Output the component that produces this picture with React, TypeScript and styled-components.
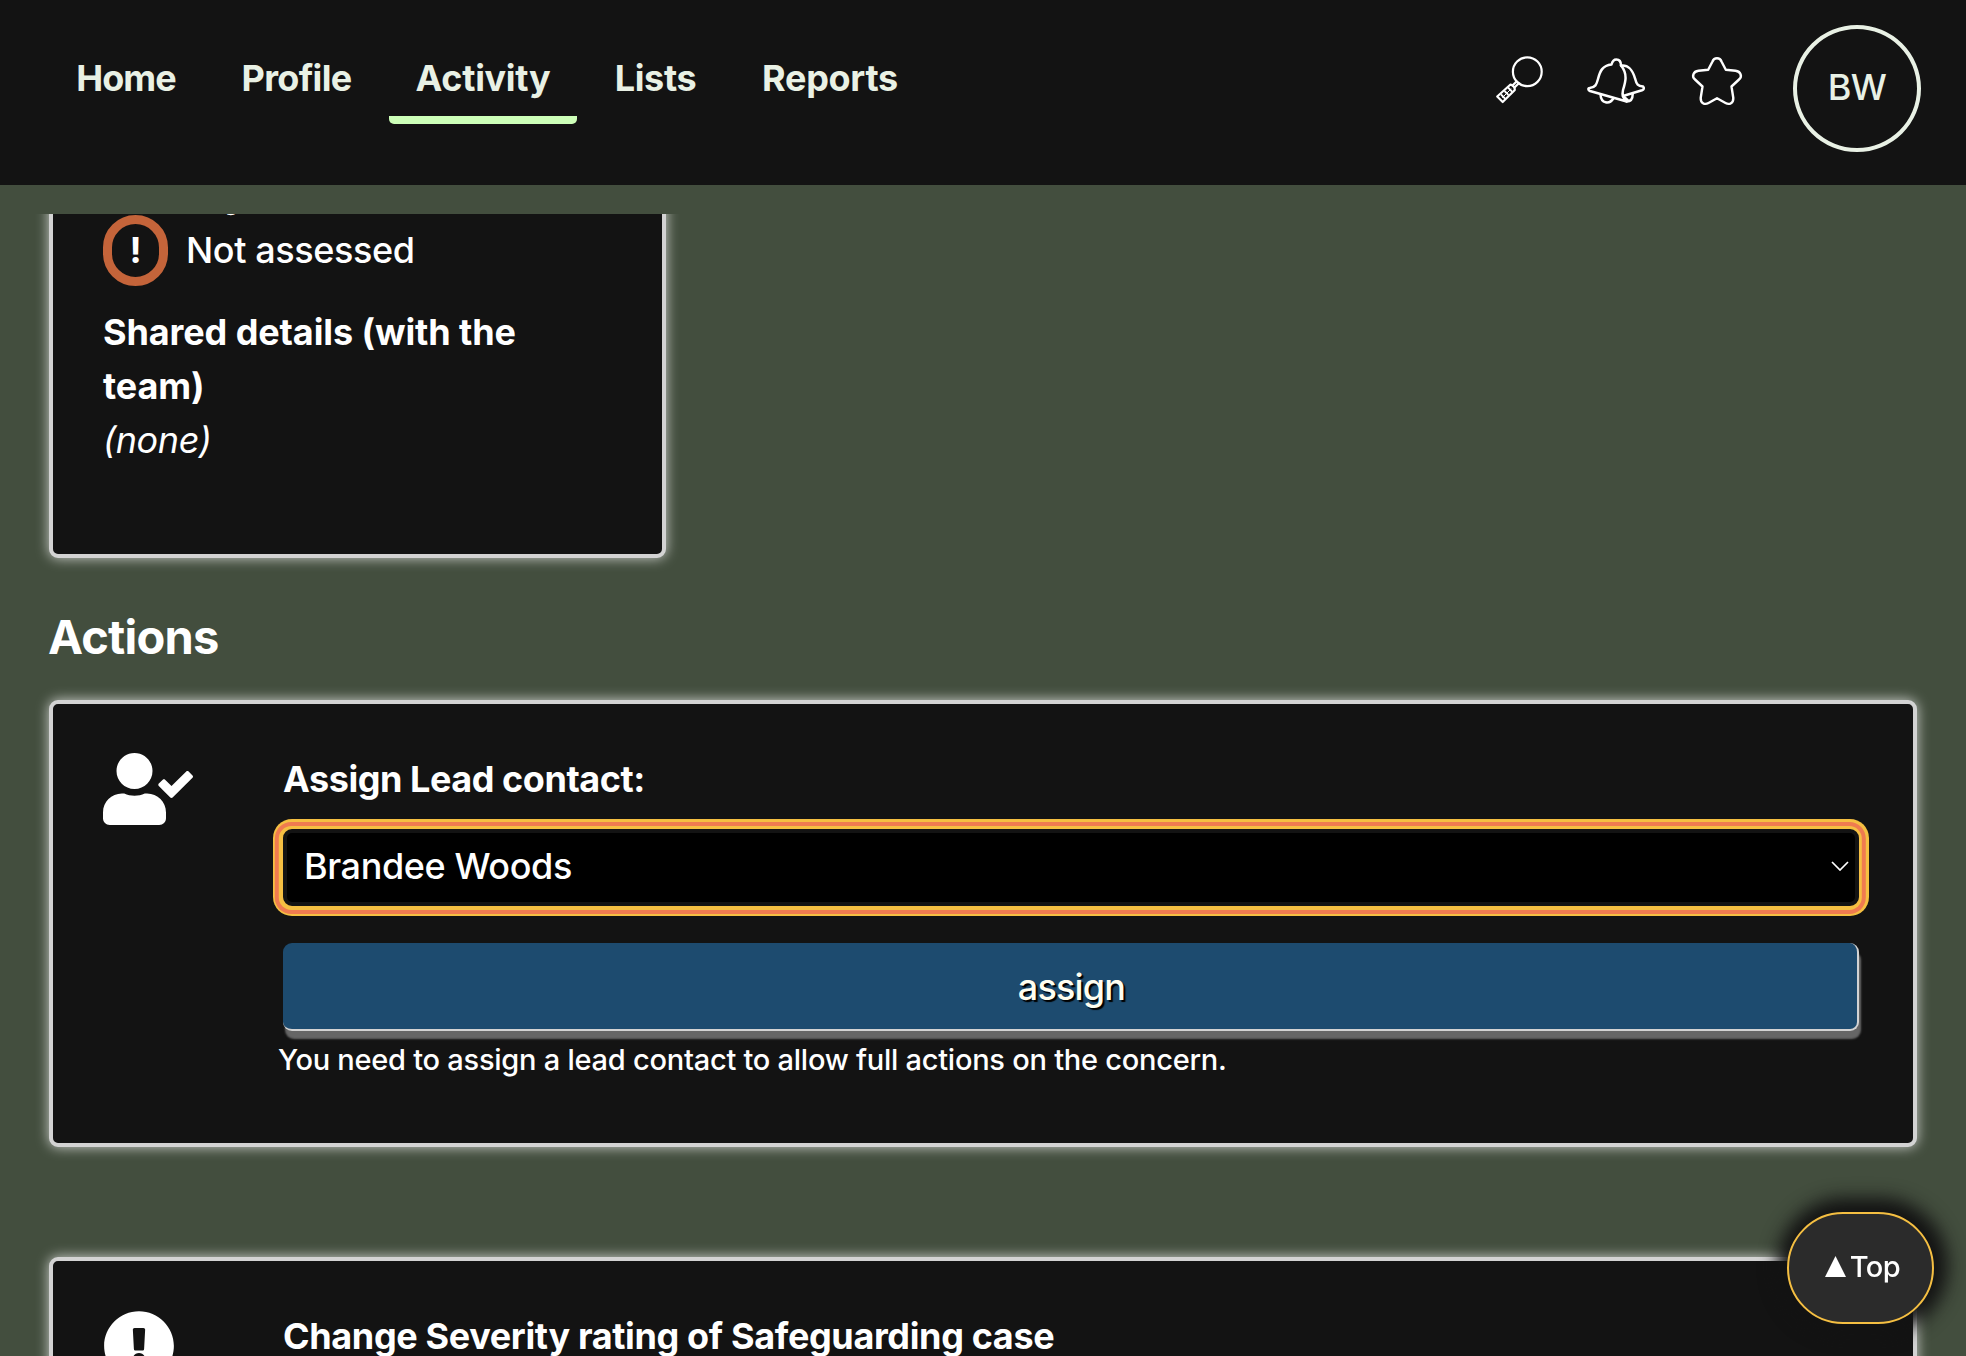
import React from "react";
import styled, { createGlobalStyle, css } from "styled-components";
import { FaUserCheck, FaExclamationCircle } from "react-icons/fa";

const Global = createGlobalStyle`
  * { box-sizing: border-box; }
  body {
    margin: 0;
    height: 1356px;
    overflow: hidden;
    background: #434e3e;
    color: #fff;
    font-family: Inter, "Liberation Sans", sans-serif;
    font-size: 36px;
    font-weight: 450;
  }
`;

const Page = styled.div`
  display: flex;
  flex-direction: column;
  height: 1356px;
  overflow: hidden;
`;

const Header = styled.header`
  flex: none;
  display: flex;
  justify-content: space-between;
  height: 185px;
  padding: 25px 45px 0 48px;
  background: #131313;
  color: #e9f1e5;
`;

const Nav = styled.nav`
  display: flex;
  gap: 10px;
`;

const Tab = styled.a<{ $width: number; $active?: boolean }>`
  display: flex;
  justify-content: center;
  align-items: center;
  width: ${(p) => p.$width}px;
  height: 99px;
  padding-top: 15px;
  border-bottom: 8px solid ${(p) => (p.$active ? "#cdffb8" : "transparent")};
  border-radius: 0 0 5px 5px;
  font-weight: 650;
  white-space: nowrap;
`;

const Fit = styled.span<{ $ls?: number }>`
  letter-spacing: ${(p) => p.$ls ?? 0}px;
`;

const Tools = styled.div`
  display: flex;
  align-items: flex-start;
`;

const ToolIcon = styled.svg<{ $gap: number }>`
  margin: 29px ${(p) => p.$gap}px 0 0;
  fill: none;
  stroke: #fff;
  stroke-linejoin: round;
  stroke-linecap: round;
  overflow: visible;
`;

const Avatar = styled.div`
  display: grid;
  place-items: center;
  width: 128px;
  height: 127px;
  border: 4px solid #e9f1e5;
  border-radius: 50%;
  letter-spacing: -0.5px;
  padding-bottom: 3px;
`;

const Scroller = styled.main`
  flex: 1;
  display: flex;
  flex-direction: column;
  min-height: 0;
  margin-top: 29px;
  padding: 0 49px;
  overflow: hidden;
`;

const panel = css`
  flex: none;
  background: #131313;
  border: 4px solid #d3d3d3;
  border-radius: 9px;
  box-shadow: 0 0 13px 0 rgba(255, 255, 255, 0.75);
`;

const SummaryCard = styled.section`
  ${panel}
  width: 617px;
  height: 404px;
  margin-top: -60px;
  padding: 0 90px 0 50px;
  line-height: 54px;
`;

const Term = styled.div<{ $ls: number }>`
  font-weight: 700;
  letter-spacing: ${(p) => p.$ls}px;
`;

const RatingTerm = styled(Term)`
  height: 54px;
  margin-top: 6px;
  padding-top: 4px;
`;

const Rating = styled.div`
  display: flex;
  align-items: center;
  gap: 18px;
  height: 71px;
  margin-top: -3px;
  line-height: 52px;
`;

const RatingText = styled(Fit)`
  margin-top: -2px;
`;

const RatingBadge = styled.span`
  display: grid;
  place-items: center;
  width: 65px;
  height: 71px;
  padding-bottom: 2px;
  border: 9px solid #c4643a;
  border-radius: 33px;
  font-weight: 700;
  line-height: 1;
`;

const SharedDetails = styled.div`
  margin-top: 19px;
`;

const Muted = styled.em`
  display: block;
  letter-spacing: -0.4px;
`;

const SectionTitle = styled.h2`
  flex: none;
  margin: 50px 0 34px -1px;
  font-size: 47px;
  line-height: 58px;
  font-weight: 650;
  letter-spacing: -0.8px;
`;

const ActionCard = styled.section<{ $height: number }>`
  ${panel}
  display: grid;
  grid-template-columns: 180px 1fr;
  align-content: start;
  height: ${(p) => p.$height}px;
  margin-bottom: 110px;
  padding: 49px 54px 0 50px;
`;

const AssignIcon = styled(FaUserCheck)`
  width: 90px;
  height: 72px;
`;

const SeverityIcon = styled(FaExclamationCircle)`
  width: 72px;
  height: 72px;
`;

const Form = styled.div`
  display: flex;
  flex-direction: column;
`;

const Label = styled.label<{ $ls: number }>`
  height: 54px;
  margin-top: -1px;
  line-height: 54px;
  font-weight: 650;
  letter-spacing: ${(p) => p.$ls}px;
  white-space: nowrap;
`;

const Select = styled.div`
  display: flex;
  align-items: center;
  justify-content: space-between;
  height: 77px;
  margin-top: 23px;
  padding: 0 6px 3px 17px;
  background: #000;
  border: 4px solid #131313;
  border-radius: 9px;
  box-shadow: -0.7px 0.5px 0 3.5px #f5bf42, -0.7px 0.5px 0 7.5px #ef7b50,
    0 0 0 10px #f5bf42;
`;

const Button = styled.button`
  height: 88px;
  margin-top: 37px;
  padding: 1px 0 0 3px;
  background: #1d4b6f;
  border: 0 solid #d3d3d3;
  border-width: 0 2px 2px 0;
  border-radius: 9px;
  box-shadow: 2px 8px 2px #666;
  color: #fffef0;
  font: inherit;
  letter-spacing: -0.8px;
  text-shadow: 2px 2px 1px #000;
`;

const Hint = styled.p`
  margin: 9px 0 0 -5px;
  font-size: 29px;
  line-height: 40px;
  white-space: nowrap;
  letter-spacing: -0.25px;
`;

const TopButton = styled.a`
  position: fixed;
  left: 1787px;
  top: 1212px;
  display: flex;
  justify-content: center;
  align-items: center;
  gap: 4px;
  width: 147px;
  height: 112px;
  padding: 0 0 4px 4px;
  background: #2b2b2b;
  border: 2px solid #f5bf42;
  border-radius: 56px;
  box-shadow: 2px -2px 18px 12px #131313;
  font-size: 29px;
  letter-spacing: -0.5px;
`;

const tabs = [
  { name: "Home", width: 156, ls: -1 },
  { name: "Profile", width: 165, ls: -0.7 },
  { name: "Activity", width: 188, ls: -0.3 },
  { name: "Lists", width: 137, ls: -0.4 },
  { name: "Reports", width: 192, ls: -0.3 },
];

const SearchIcon = () => (
  <ToolIcon $gap={43} width="50" height="50" viewBox="0 0 50 50" strokeWidth="2.2">
    <circle cx="33.300" cy="17.700" r="14.400" />
    <path d="M22.500 27.500 L18.500 31.500 M24.500 29.500 L20.500 33.500" />
    <path d="M16.500 30.500 L18.500 31.500 L20.500 33.500 L20.800 36 L8.700 48 L3.200 42.500 Z" />
    <path d="M14.500 34 L17.500 37 M11 37.500 L14 40.500 M7.500 41 L10.500 44" strokeWidth="1.8" />
    <path d="M8.500 43.500 L17 35" strokeWidth="1" />
  </ToolIcon>
);

const BellIcon = () => (
  <ToolIcon $gap={46} width="59" height="50" viewBox="0 0 59 50" strokeWidth="2.5">
    <path d="M2.500 34 C8.500 33.500 9.500 30.500 11 25 C13 17 15.500 11.500 24.500 10.500 C25.500 7 26.500 5.500 29.300 5.500 C32 5.500 34 7.500 34 11.500 C41 20 38.500 28 36 36 C34.800 41 36 44.500 39.700 47.500 L3 37 C0.800 36 1 34 2.500 34 Z" />
    <path d="M34 11.500 C42 10.500 45.500 16 48 24.300 C49.500 30.500 51 32 56 32.500 C57.500 34 57 35.500 55 36.200 L36 42" />
    <path d="M13.500 40.500 C14 50 22.500 50.500 26.300 44.500 M36 42 L41 46.500 M39.700 47.500 C43.500 47.500 45.700 45 45.700 40" />
  </ToolIcon>
);

const StarIcon = () => (
  <ToolIcon $gap={51} width="50" height="50" viewBox="0 0 50 50" strokeWidth="2.4">
    <path d="M20.500 7.500 C22 3.200 28 3.200 29.500 7.500 L33.800 15.800 L43.500 16.800 C49 17.500 50.500 22.500 47 25.500 L39.500 32.500 L41.300 44 C41.500 49 37.500 51.200 33.500 49 L25 44.300 L16.500 49 C12.500 51.200 8.500 49 8.700 44 L10.500 32.500 L3 25.500 C-0.500 22.500 1 17.500 6.500 16.800 L16.200 15.800 Z" />
  </ToolIcon>
);

const Chevron = () => (
  <svg width="18" height="10" viewBox="0 0 18 10" fill="none" stroke="#fff" strokeWidth="1.7">
    <path d="M1 1 L9 9 L17 1" />
  </svg>
);

export default function App() {
  return (
    <Page>
      <Global />
      <Header>
        <Nav>
          {tabs.map((t) => (
            <Tab key={t.name} $width={t.width} $active={t.name === "Activity"}>
              <Fit $ls={t.ls}>{t.name}</Fit>
            </Tab>
          ))}
        </Nav>
        <Tools>
          <SearchIcon />
          <BellIcon />
          <StarIcon />
          <Avatar>BW</Avatar>
        </Tools>
      </Header>
      <Scroller>
        <SummaryCard>
          <RatingTerm $ls={-0.5}>Severity</RatingTerm>
          <Rating>
            <RatingBadge>!</RatingBadge>
            <RatingText $ls={-0.4}>Not assessed</RatingText>
          </Rating>
          <SharedDetails>
            <Term $ls={-0.1}>Shared details (with the team)</Term>
            <Muted>(none)</Muted>
          </SharedDetails>
        </SummaryCard>
        <SectionTitle>Actions</SectionTitle>
        <ActionCard $height={447}>
          <AssignIcon />
          <Form>
            <Label $ls={-0.45}>Assign Lead contact:</Label>
            <Select>
              <Fit $ls={-0.4}>Brandee Woods</Fit>
              <Chevron />
            </Select>
            <Button>assign</Button>
            <Hint>You need to assign a lead contact to allow full actions on the concern.</Hint>
          </Form>
        </ActionCard>
        <ActionCard $height={447}>
          <SeverityIcon />
          <Form>
            <Label $ls={-0.36}>Change Severity rating of Safeguarding case</Label>
          </Form>
        </ActionCard>
      </Scroller>
      <TopButton>
        <svg width="21" height="21" viewBox="0 0 21 21" fill="#fff">
          <path d="M10.500 0 L21 21 H0 Z" />
        </svg>
        Top
      </TopButton>
    </Page>
  );
}
